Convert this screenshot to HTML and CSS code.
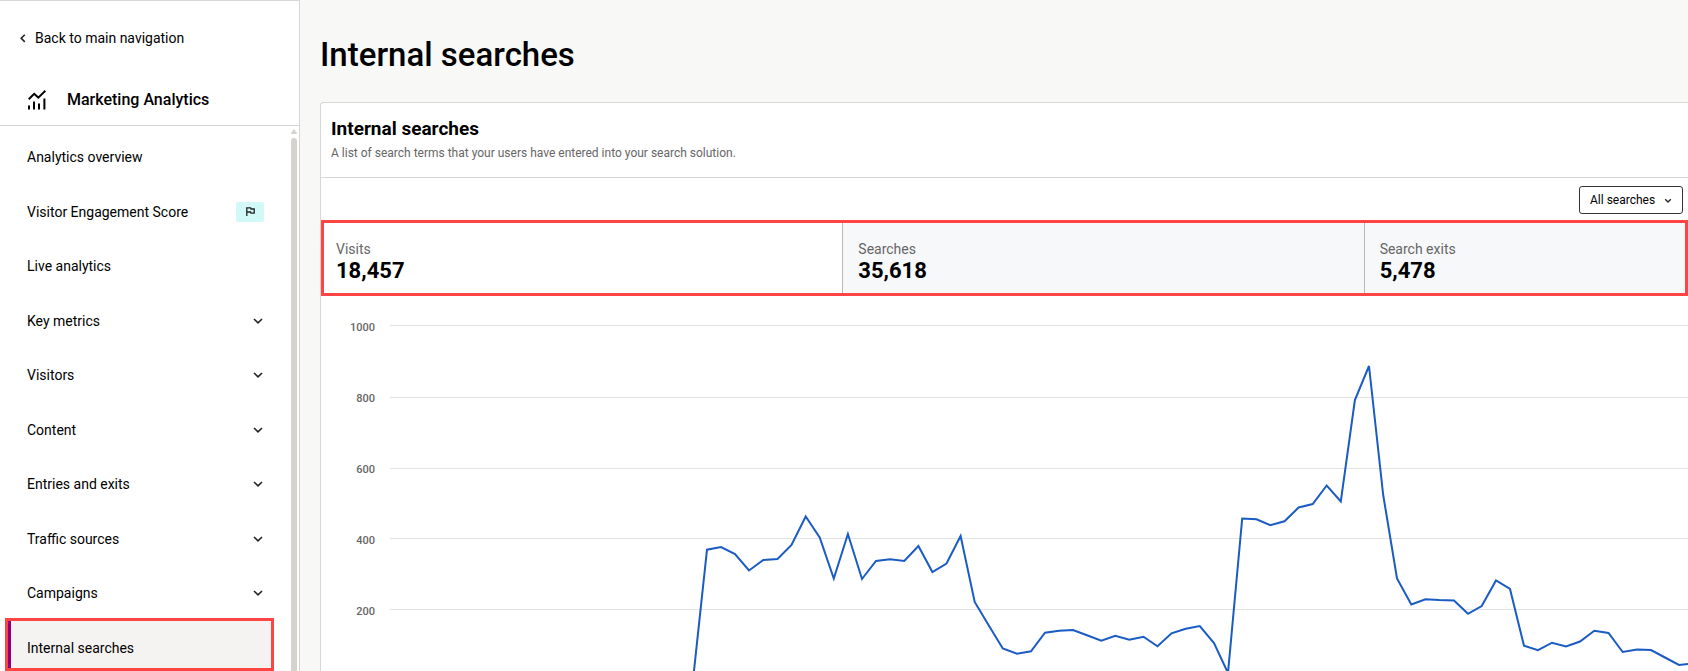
FILE: index.html
```html
<!DOCTYPE html>
<html lang="en">
<head>
  <meta charset="UTF-8">
  <meta name="viewport" content="width=device-width, initial-scale=1.0">
  <title>Internal searches</title>
  <link rel="stylesheet" href="styles.css">
</head>
<body>

  <aside class="sidebar">
    <div class="sidebar-header">
      <a class="back-link" href="#">
        <svg width="6" height="9" viewBox="0 0 6 9"><path d="M4.8 0.7 L1.2 4.3 L4.8 7.9"/></svg>
        Back to main navigation
      </a>
      <div class="module">
        <svg width="18" height="20" viewBox="0 0 18 20">
          <path class="trend" d="M0.7 9.3 L6.2 3.8 L10.3 7.6 L17.4 0.8"/>
          <path class="bars" d="M1 15.5V19.5 M6 11.5V19.5 M11 13.5V19.5 M16.4 8.5V19.5"/>
        </svg>
        <span>Marketing Analytics</span>
      </div>
    </div>

    <div class="sidebar-body">
      <nav>
        <ul class="menu">
          <li><a href="#">Analytics overview</a></li>
          <li>
            <a href="#">Visitor Engagement Score
              <span class="flag"><svg width="9" height="9" viewBox="0 0 9 9"><path d="M0.8 9V0.8H4.6L5 2H8.2V6.2H5L4.6 5H0.8"/></svg></span>
            </a>
          </li>
          <li><a href="#">Live analytics</a></li>
          <li><a href="#">Key metrics <svg class="chevron" width="10" height="6" viewBox="0 0 10 6"><path d="M1 1 L5 4.8 L9 1"/></svg></a></li>
          <li><a href="#">Visitors <svg class="chevron" width="10" height="6" viewBox="0 0 10 6"><path d="M1 1 L5 4.8 L9 1"/></svg></a></li>
          <li><a href="#">Content <svg class="chevron" width="10" height="6" viewBox="0 0 10 6"><path d="M1 1 L5 4.8 L9 1"/></svg></a></li>
          <li><a href="#">Entries and exits <svg class="chevron" width="10" height="6" viewBox="0 0 10 6"><path d="M1 1 L5 4.8 L9 1"/></svg></a></li>
          <li><a href="#">Traffic sources <svg class="chevron" width="10" height="6" viewBox="0 0 10 6"><path d="M1 1 L5 4.8 L9 1"/></svg></a></li>
          <li><a href="#">Campaigns <svg class="chevron" width="10" height="6" viewBox="0 0 10 6"><path d="M1 1 L5 4.8 L9 1"/></svg></a></li>
          <li class="active"><a href="#">Internal searches</a></li>
        </ul>
      </nav>
      <div class="scrollbar">
        <svg width="6" height="5" viewBox="0 0 6 5"><path d="M3 0 L6 4 Q6 5 5 5 H1 Q0 5 0 4 Z"/></svg>
        <div class="thumb"></div>
      </div>
    </div>
  </aside>

  <main>
    <h1>Internal searches</h1>

    <section class="card">
      <header>
        <h2>Internal searches</h2>
        <p>A list of search terms that your users have entered into your search solution.</p>
      </header>

      <div class="toolbar">
        <div class="dropdown">
          <select aria-label="Search filter">
            <option>All searches</option>
          </select>
          <svg width="8" height="6" viewBox="0 0 8 6"><path d="M1.2 1.2 L4 4 L6.8 1.2"/></svg>
        </div>
      </div>

      <div class="stats">
        <div class="stat selected">
          <span>Visits</span>
          <strong>18,457</strong>
        </div>
        <div class="stat">
          <span>Searches</span>
          <strong>35,618</strong>
        </div>
        <div class="stat">
          <span>Search exits</span>
          <strong>5,478</strong>
        </div>
      </div>

      <div class="chart">
        <div class="y-axis">
          <span>1000</span>
          <span>800</span>
          <span>600</span>
          <span>400</span>
          <span>200</span>
        </div>
        <svg class="plot" viewBox="0 0 1298 356" preserveAspectRatio="none">
          <path class="grid" d="M0 0.5H1298 M0 72.5H1298 M0 143.5H1298 M0 213.5H1298 M0 284.5H1298"/>
          <polyline class="line" points="303,355 317,224.7 331,222 345,229 359,245.5 373.3,235 387.5,234 401.5,220 415.7,191.5 429.7,212.5 443.8,253.5
            457.9,209 472,254 486,236 500,234.3 514.3,236 528.4,221 542.4,247 556.5,238.5 570.6,211 584.7,277
            598.8,300.5 612.8,323.5 627,328.7 641,326.3 655,307.7 669,305.7 683,305 697,310.3 711.3,315.7 725.3,310.7
            739.3,314.7 753.5,311.7 767.5,321.3 781.5,308.3 795.7,303.7 809.8,301 824,318 838,348 852.2,193.5
            866.5,194.3 880.3,200.2 894.5,196.3 908.6,182.5 922.7,179 936.7,160.5 950.8,176.5 964.9,75 979,41
            993.2,170 1007,253.5 1021.3,279.5 1035.5,274.2 1049,275 1064,275.5 1078,288.8 1091.7,281 1106,255.5
            1120,264 1134,320.7 1148,325.2 1162,317.7 1176,321.5 1190,316.5 1204.3,305.7 1218.5,308 1232.7,327
            1247,324.5 1261,325 1275,332.5 1289,340 1298,339"/>
        </svg>
      </div>
    </section>
  </main>

</body>
</html>
```
FILE: styles.css
```css
*, *::after {
  box-sizing: border-box;
}
body {
  margin: 0;
  display: flex;
  height: 100vh;
  overflow: hidden;
  font-family: Roboto, "Liberation Sans", sans-serif;
  font-size: 14px;
  color: #000;
  background: #f8f8f7;
}
svg {
  fill: none;
  stroke: #222;
  flex-shrink: 0;
}
h1, h2, p, ul {
  margin: 0;
  padding: 0;
}

/* Sidebar */
.sidebar {
  width: 300px;
  flex-shrink: 0;
  display: flex;
  flex-direction: column;
  background: #fff;
  border-top: 1px solid #d6d6d6;
  border-right: 1px solid #d6d6d6;
}
.sidebar-header {
  padding: 25px 20px 12px;
  border-bottom: 1px solid #d6d6d6;
}
.back-link {
  display: flex;
  align-items: center;
  gap: 9px;
  line-height: 24px;
  color: #000;
  text-decoration: none;
}
.back-link svg {
  stroke-width: 1.6;
}
.module {
  display: flex;
  align-items: center;
  gap: 21px;
  margin-top: 37px;
  padding-left: 8px;
  font-size: 16px;
  font-weight: 500;
  line-height: 26px;
}
.module svg {
  stroke: #000;
  stroke-width: 2;
}
.sidebar-body {
  flex: 1;
  min-height: 0;
  display: flex;
  justify-content: space-between;
}
nav {
  width: 272px;
  padding: 4px 0 0 8px;
}
.menu {
  display: grid;
  grid-auto-rows: 1fr;
  min-height: 545px;
  list-style: none;
}
.menu a {
  display: flex;
  align-items: center;
  justify-content: space-between;
  height: 100%;
  padding: 0 8px 0 19px;
  color: #000;
  text-decoration: none;
}
.chevron {
  margin-right: 1px;
  stroke-width: 1.6;
}
.flag {
  display: flex;
  align-items: center;
  justify-content: center;
  width: 28px;
  height: 20px;
  border-radius: 2px;
  background: #d1f9f8;
}
.flag svg {
  stroke-width: 1.3;
}
.active {
  position: relative;
  background: #f5f3f2;
  box-shadow: inset 3px 0 #8f0080;
}
.active::after {
  content: "";
  position: absolute;
  top: -3px;
  left: -3px;
  width: 269px;
  height: 53px;
  border: 3px solid #ff4444;
}
.scrollbar {
  display: flex;
  flex-direction: column;
  align-items: center;
  gap: 4px;
  width: 6px;
  margin-right: 2px;
  padding-top: 3px;
}
.scrollbar svg {
  fill: #d6d2ce;
  stroke: none;
}
.thumb {
  flex: 1;
  width: 6px;
  border-radius: 3px 3px 0 0;
  background: #d6d2ce;
}

/* Main content */
main {
  flex: 1;
  min-width: 0;
  padding: 34px 0 0 20px;
}
h1 {
  font-size: 33px;
  font-weight: 500;
  line-height: 42px;
}
.card {
  margin-top: 26px;
  background: #fff;
  border: 1px solid #d6d6d6;
  border-right: 0;
  border-radius: 4px 0 0 0;
}
.card header {
  padding: 14px 10px 12px;
  border-bottom: 1px solid #d6d6d6;
}
h2 {
  font-size: 19px;
  font-weight: 700;
  line-height: 24px;
}
.card p {
  font-size: 12px;
  line-height: 24px;
  color: #666;
}
.toolbar {
  display: flex;
  justify-content: flex-end;
  padding: 8px 5px 6px;
}
.dropdown {
  position: relative;
}
.dropdown select {
  appearance: none;
  width: 104px;
  height: 28px;
  padding: 0 10px;
  border: 1px solid #333;
  border-radius: 3px;
  background: #fff;
  font: 12px Roboto, "Liberation Sans", sans-serif;
  color: #000;
}
.dropdown svg {
  position: absolute;
  right: 11px;
  top: 12px;
  stroke-width: 1.3;
}
.stats {
  display: grid;
  grid-template-columns: 45fr 45fr 28fr;
  outline: 3px solid #ff4444;
  outline-offset: -3px;
}
.stat {
  padding: 19px 15px 13px;
  background: #f7f8fa;
}
.stat + .stat {
  border-left: 1px solid #b8b8b8;
}
.stat.selected {
  background: #fff;
}
.stat span {
  display: block;
  line-height: 20px;
  color: #666;
}
.stat strong {
  display: block;
  font-size: 22px;
  line-height: 24px;
}

/* Chart */
.chart {
  display: flex;
  padding-top: 29px;
}
.y-axis {
  width: 69px;
  padding-right: 15px;
  text-align: right;
  font-size: 11px;
  font-weight: 500;
  color: #666;
}
.y-axis span {
  display: block;
  height: 71px;
  line-height: 6px;
}
.plot {
  flex: 1;
  min-width: 0;
  height: 356px;
}
.grid {
  stroke: #e2e2e2;
  vector-effect: non-scaling-stroke;
}
.line {
  stroke: #1a5bc4;
  stroke-width: 2;
  vector-effect: non-scaling-stroke;
}
```
